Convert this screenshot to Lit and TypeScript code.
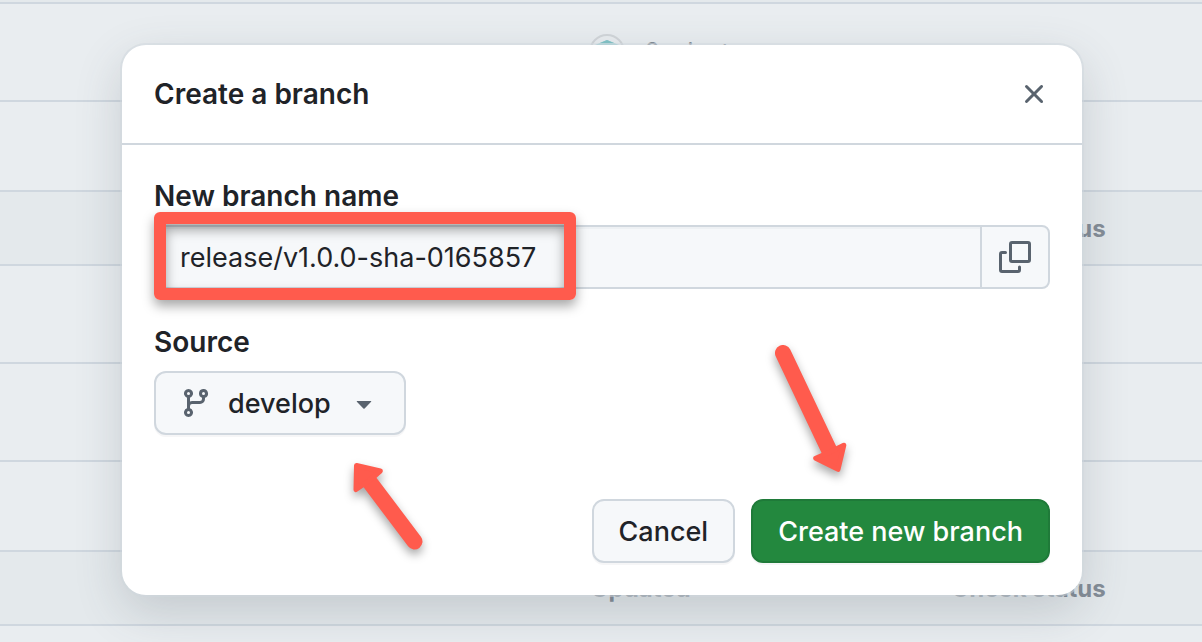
import { LitElement, html, css, svg } from "lit";
import { customElement, state } from "lit/decorators.js";

type Row = { kind: "edge" | "head" | "tall" | "foot"; updated?: string };

const ROWS: Row[] = [
  { kind: "edge" },
  { kind: "tall", updated: "2 minutes ago" },
  { kind: "foot" },
  { kind: "head" },
  { kind: "tall" },
  { kind: "tall" },
  { kind: "foot" },
  { kind: "head" },
  { kind: "foot" },
];

const octicon = (d: string) =>
  html`<svg class="octicon" viewBox="0 0 16 16" aria-hidden="true">${svg`<path d=${d}></path>`}</svg>`;

const X =
  "M3.72 3.72a.75.75 0 0 1 1.06 0L8 6.94l3.22-3.22a.749.749 0 0 1 1.275.326.749.749 0 0 1-.215.734L9.06 8l3.22 3.22a.749.749 0 0 1-.326 1.275.749.749 0 0 1-.734-.215L8 9.06l-3.22 3.22a.751.751 0 0 1-1.042-.018.751.751 0 0 1-.018-1.042L6.94 8 3.72 4.78a.75.75 0 0 1 0-1.06Z";
const BRANCH =
  "M9.5 3.25a2.25 2.25 0 1 1 3 2.122V6A2.5 2.5 0 0 1 10 8.5H6a1 1 0 0 0-1 1v1.128a2.251 2.251 0 1 1-1.5 0V5.372a2.25 2.25 0 1 1 1.5 0v1.836A2.493 2.493 0 0 1 6 7h4a1 1 0 0 0 1-1v-.628A2.25 2.25 0 0 1 9.5 3.25Zm-6 0a.75.75 0 1 0 1.5 0 .75.75 0 0 0-1.5 0Zm8.25-.75a.75.75 0 1 0 0 1.5.75.75 0 0 0 0-1.5ZM4.25 12a.75.75 0 1 0 0 1.5.75.75 0 0 0 0-1.5Z";
const TRIANGLE =
  "m4.427 7.427 3.396 3.396a.25.25 0 0 0 .354 0l3.396-3.396A.25.25 0 0 0 11.396 7H4.604a.25.25 0 0 0-.177.427Z";

/** The branch listing that lies behind the dialog. */
@customElement("branch-list")
export class BranchList extends LitElement {
  static styles = css`
    :host {
      display: block;
      overflow: hidden;
      background: #e9edf0;
      color: #848d97;
    }
    .table {
      width: 100%;
      table-layout: fixed;
      border-spacing: 0;
      font-size: 24px;
      line-height: 36px;
    }
    .name {
      width: 49%;
    }
    .updated {
      width: 30%;
    }
    .cell {
      box-sizing: border-box;
      padding: 0;
      border-bottom: 2px solid #cfd7df;
      text-align: left;
    }
    .edge .cell {
      height: 4px;
      background: #e4e9ec;
      line-height: 0;
    }
    .tall .cell {
      height: 98px;
    }
    .foot .cell {
      height: 90px;
    }
    .head .cell {
      height: 74px;
      padding: 2px 0 0 2px;
      background: #e4e9ec;
      font-weight: 700;
    }
    .when {
      display: flex;
      align-items: center;
      gap: 20px;
    }
    .avatar {
      width: 36px;
      height: 36px;
    }
  `;

  private row(r: Row) {
    if (r.kind === "head") {
      return html`<tr class="head">
        <th class="cell"></th>
        <th class="cell" scope="col">Updated</th>
        <th class="cell" scope="col">Check status</th>
      </tr>`;
    }
    return html`<tr class=${r.kind}>
      <td class="cell"></td>
      <td class="cell">
        ${r.updated
          ? html`<div class="when">
              <svg class="avatar" viewBox="0 0 36 36" aria-hidden="true">
                <circle cx="18" cy="18" r="17" fill="#e9edf0" stroke="#d1d5d9" stroke-width="2"></circle>
                <path d="M18 6 30 11v13l-12 7-12-7V11Z" fill="#a3d3d8"></path>
                <path d="M18 6 25 9H11Z" fill="#83c3c7"></path>
              </svg>
              <span>${r.updated}</span>
            </div>`
          : ""}
      </td>
      <td class="cell"></td>
    </tr>`;
  }

  render() {
    return html`<table class="table">
      <colgroup>
        <col class="name" />
        <col class="updated" />
        <col />
      </colgroup>
      <tbody>
        ${ROWS.map((r) => this.row(r))}
      </tbody>
    </table>`;
  }
}

@customElement("create-branch-dialog")
export class CreateBranchDialog extends LitElement {
  static styles = css`
    :host {
      display: block;
    }
    .dialog {
      border-radius: 24px;
      background: #fff;
      color: #1f2328;
      box-shadow:
        0 0 0 2px rgba(208, 215, 222, 0.5),
        0 16px 48px rgba(66, 74, 83, 0.2);
    }
    .header {
      display: flex;
      align-items: center;
      justify-content: space-between;
      padding: 28px 32px;
      border-bottom: 2px solid #d0d7de;
    }
    .title,
    .label {
      margin: 0;
      font-size: 28px;
      line-height: 42px;
      font-weight: 600;
    }
    .octicon {
      display: block;
      width: 32px;
      height: 32px;
      fill: #59636e;
    }
    .close {
      padding: 0;
      border: 0;
      background: none;
      cursor: pointer;
    }
    .body {
      display: flex;
      flex-direction: column;
      gap: 32px;
      padding: 30px 32px 32px;
    }
    .field {
      display: flex;
      flex-direction: column;
      align-items: flex-start;
      gap: 8px;
    }
    .group {
      position: relative;
      display: flex;
      align-self: stretch;
      height: 64px;
    }
    .input,
    .copy,
    .select,
    .button {
      box-sizing: border-box;
      border: 2px solid #d0d7de;
      background: #f6f8fa;
      color: #1f2328;
      font-family: inherit;
      font-size: 27px;
    }
    .input {
      flex: 1;
      min-width: 0;
      padding: 0 24px;
      border-right: 0;
      border-radius: 8px 0 0 8px;
      box-shadow: inset 0 2px 0 rgba(208, 215, 222, 0.2);
    }
    .copy {
      display: grid;
      place-items: center;
      width: 70px;
      padding: 0;
      border-radius: 0 8px 8px 0;
      cursor: pointer;
    }
    .copy-icon {
      width: 32px;
      height: 32px;
      fill: none;
      stroke: #59636e;
      stroke-width: 3;
      stroke-linecap: round;
    }
    .picker {
      position: relative;
      display: grid;
      grid-template-columns: auto 1fr auto;
      align-items: center;
      width: 252px;
      height: 64px;
      padding: 0 26px;
      box-sizing: border-box;
    }
    .select {
      grid-area: 1 / 1 / 2 / 4;
      width: 252px;
      height: 64px;
      margin: 0 -26px;
      padding: 0 56px 0 72px;
      appearance: none;
      border-radius: 12px;
      box-shadow: 0 2px 0 rgba(31, 35, 40, 0.04);
      font-weight: 500;
      cursor: pointer;
    }
    .branch {
      grid-area: 1 / 1;
      z-index: 1;
      pointer-events: none;
    }
    .caret {
      grid-area: 1 / 3;
      z-index: 1;
      pointer-events: none;
    }
    .footer {
      display: flex;
      justify-content: flex-end;
      gap: 16px;
      margin-top: 32px;
    }
    .button {
      height: 64px;
      padding: 0 25px;
      border-radius: 12px;
      box-shadow: 0 2px 0 rgba(31, 35, 40, 0.04);
      font-weight: 500;
      white-space: nowrap;
      cursor: pointer;
    }
    .primary {
      border-color: #1f7a39;
      background: #23883e;
      color: #fff;
    }
    .action {
      position: relative;
      display: flex;
    }
    .mark {
      position: absolute;
      top: -13px;
      left: 0;
      box-sizing: border-box;
      width: 422px;
      height: 88px;
      border: 12px solid #ff5b4d;
      border-radius: 6px;
      box-shadow:
        0 6px 12px rgba(0, 0, 0, 0.35),
        inset 0 6px 12px rgba(0, 0, 0, 0.35);
      pointer-events: none;
    }
    .arrow {
      position: absolute;
      overflow: visible;
      fill: #ff5b4d;
      stroke: #ff5b4d;
      stroke-linejoin: round;
      filter: drop-shadow(0 5px 5px rgba(0, 0, 0, 0.35));
      pointer-events: none;
    }
    .shaft {
      stroke-width: 16;
      stroke-linecap: round;
    }
    .tip {
      stroke-width: 5;
    }
    .to-source {
      top: 89px;
      left: 196px;
      width: 76px;
      height: 92px;
    }
    .to-create {
      right: 202px;
      bottom: 89px;
      width: 74px;
      height: 130px;
    }
  `;

  @state() private branch = "release/v1.0.0-sha-0165857";

  render() {
    return html`
      <section class="dialog" role="dialog" aria-labelledby="title">
        <header class="header">
          <h1 class="title" id="title">Create a branch</h1>
          <button class="close" type="button" aria-label="Close">${octicon(X)}</button>
        </header>
        <form class="body" @submit=${(e: Event) => e.preventDefault()}>
          <div class="field">
            <label class="label" for="branch">New branch name</label>
            <div class="group">
              <input
                class="input"
                id="branch"
                type="text"
                spellcheck="false"
                .value=${this.branch}
                @input=${(e: Event) => (this.branch = (e.target as HTMLInputElement).value)}
              />
              <button class="copy" type="button" aria-label="Copy branch name">
                <svg class="copy-icon" viewBox="0 0 32 32" aria-hidden="true">
                  <rect x="11.5" y="1.5" width="19" height="19" rx="1.5"></rect>
                  <path
                    d="M6.5 11.5H3A1.5 1.5 0 0 0 1.5 13v16A1.5 1.5 0 0 0 3 30.5h16a1.5 1.5 0 0 0 1.5-1.5v-3"
                  ></path>
                </svg>
              </button>
              <div class="mark"></div>
            </div>
          </div>
          <div class="field">
            <label class="label" for="source">Source</label>
            <div class="picker">
              <select class="select" id="source">
                <option>develop</option>
              </select>
              <span class="branch">${octicon(BRANCH)}</span>
              <span class="caret">${octicon(TRIANGLE)}</span>
              <svg class="arrow to-source" viewBox="350 460 76 92" aria-hidden="true">
                <path class="shaft" d="M414.5 541.5 368.5 480.5"></path>
                <path class="tip" d="M356.5 465.5 380.3 471 370 480 356 489.5Z"></path>
              </svg>
            </div>
          </div>
          <footer class="footer">
            <button class="button" type="button">Cancel</button>
            <div class="action">
              <button class="button primary" type="submit">Create new branch</button>
              <svg class="arrow to-create" viewBox="774 344 74 130" aria-hidden="true">
                <path class="shaft" d="M783 353 830 452"></path>
                <path class="tip" d="M838 469.3 843.8 445.3 830 452 815.7 458.3Z"></path>
              </svg>
            </div>
          </footer>
        </form>
      </section>
    `;
  }
}

@customElement("app-root")
export class AppRoot extends LitElement {
  static styles = css`
    :host {
      position: relative;
      display: block;
      min-height: 100vh;
      overflow: hidden;
      background: #e9edf0;
      font-family: Inter, "Liberation Sans", sans-serif;
    }
    .backdrop {
      position: absolute;
      inset: 0;
    }
    .overlay {
      position: relative;
      padding: 45px 120px 47px 122px;
    }
  `;

  render() {
    return html`
      <branch-list class="backdrop" aria-hidden="true"></branch-list>
      <div class="overlay"><create-branch-dialog></create-branch-dialog></div>
    `;
  }
}
